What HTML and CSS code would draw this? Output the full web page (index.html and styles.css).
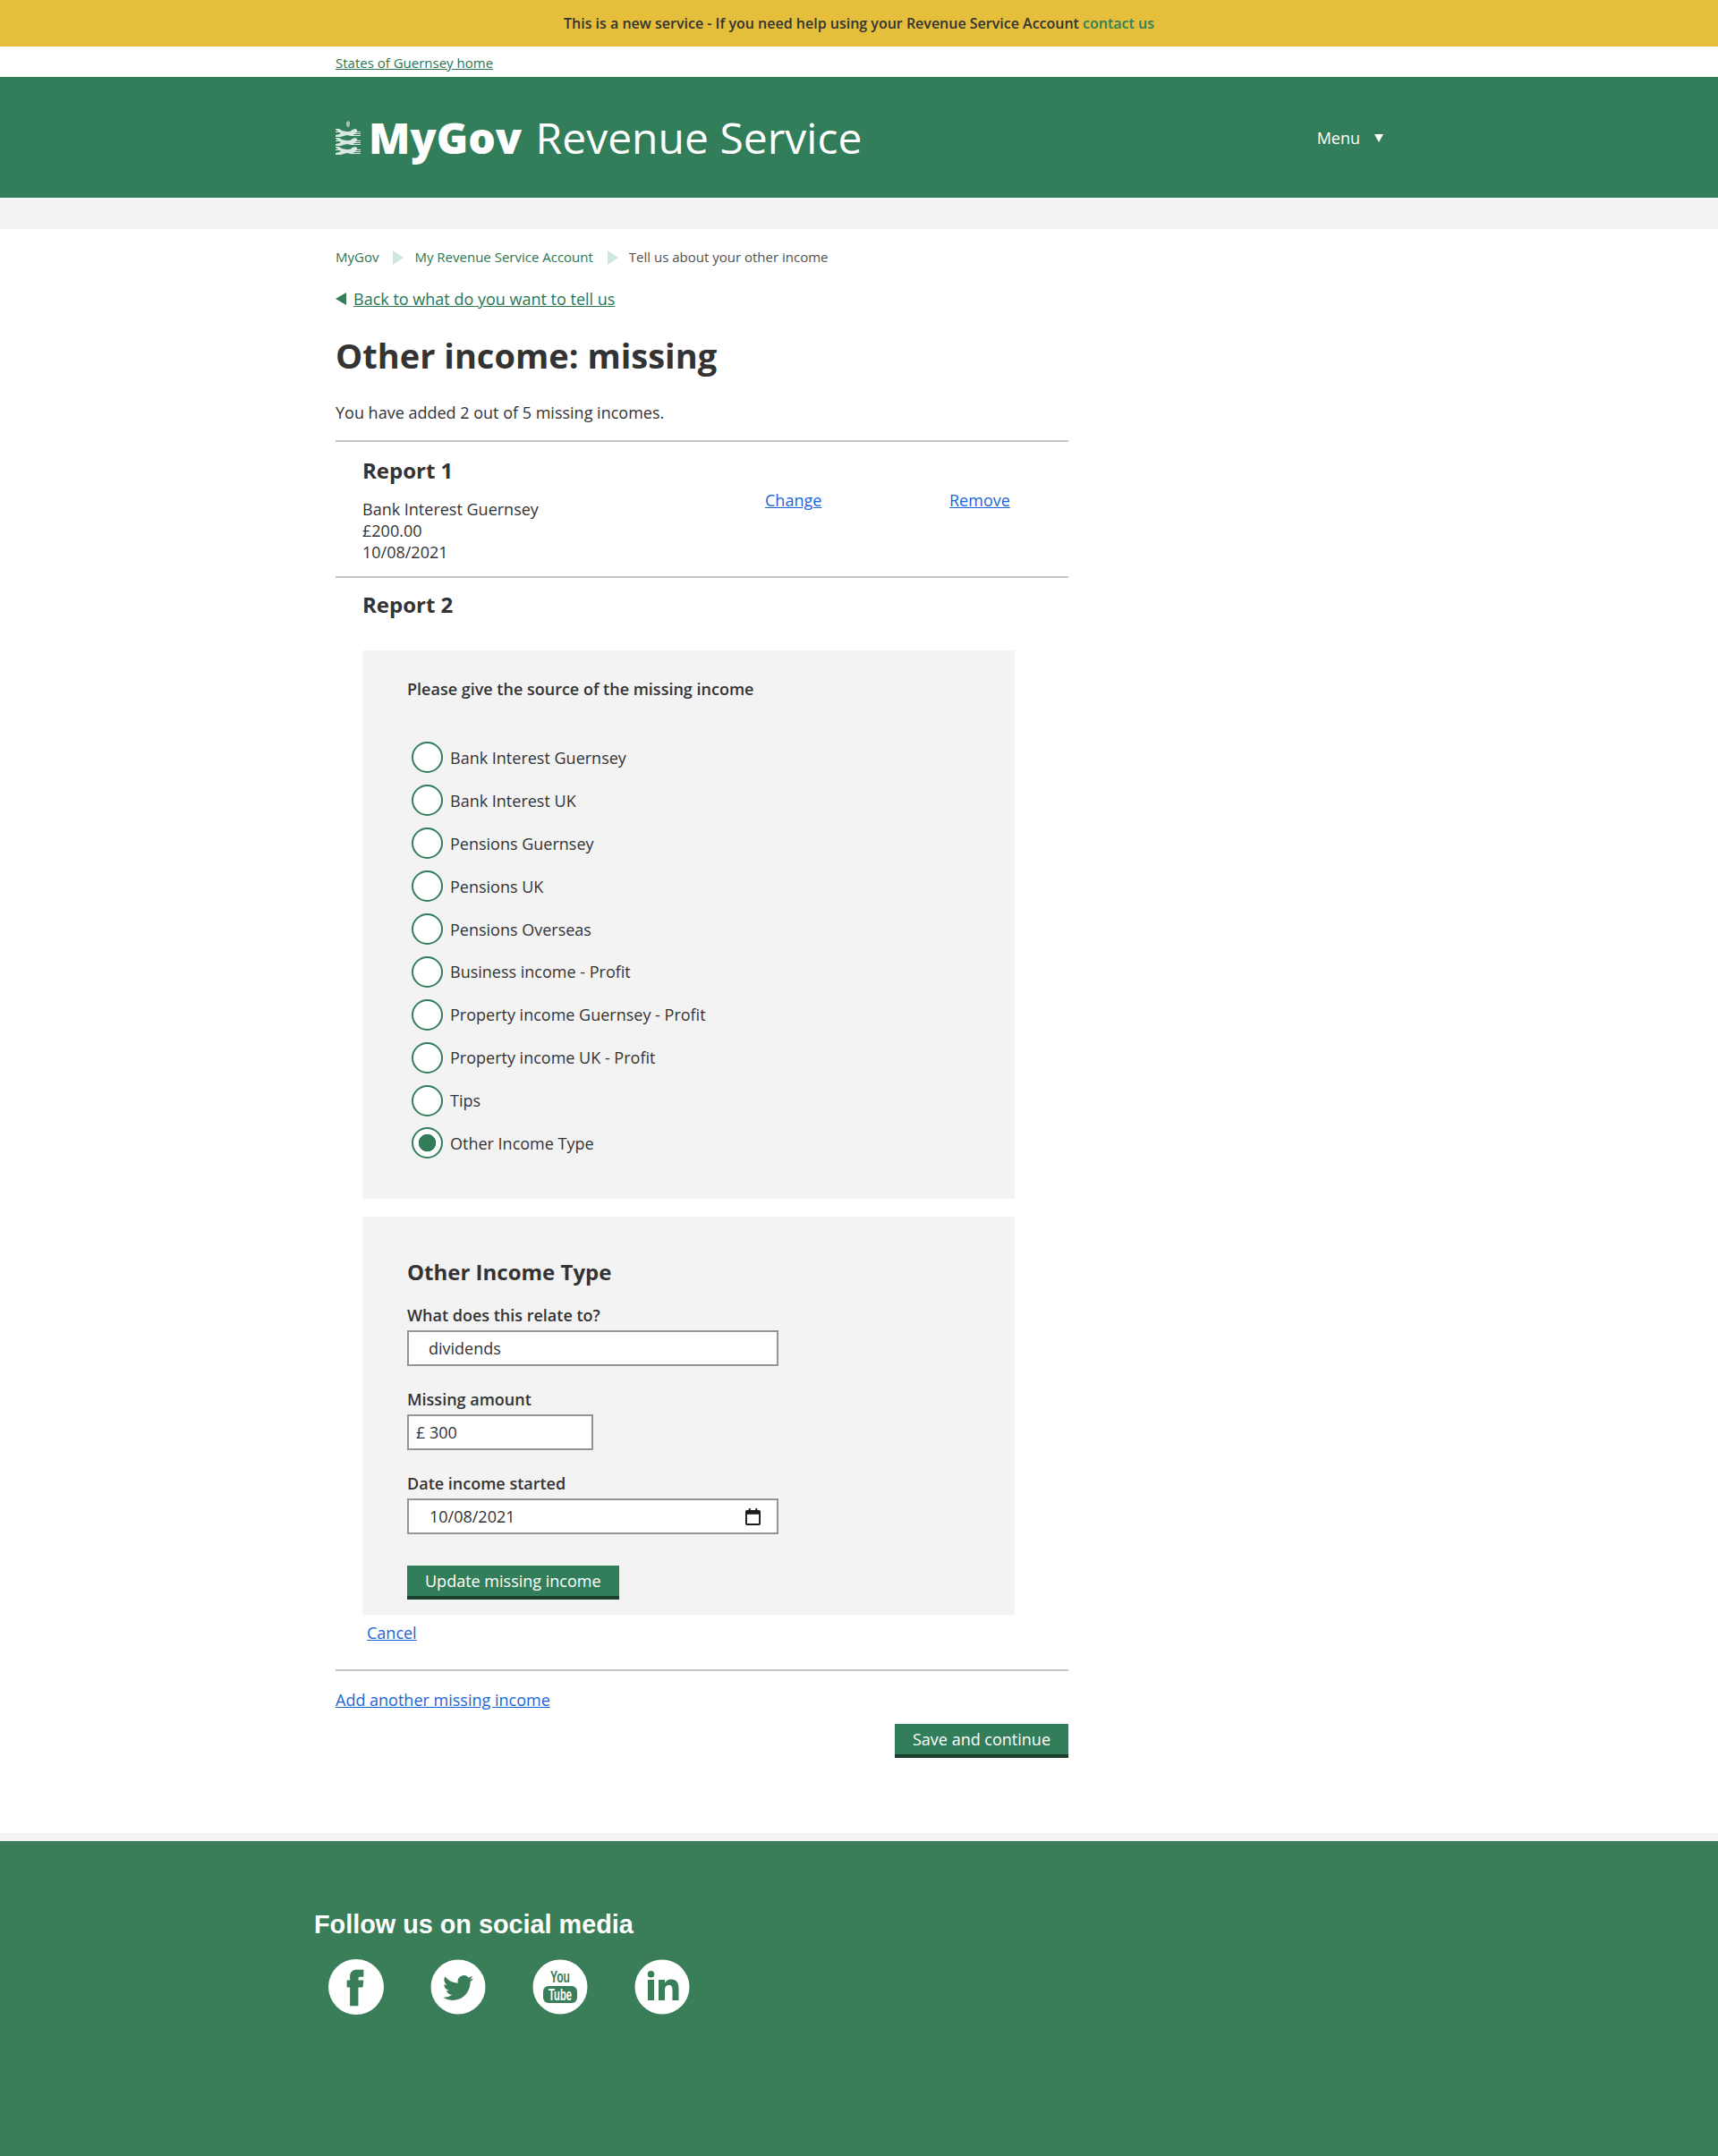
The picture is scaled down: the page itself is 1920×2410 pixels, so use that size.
FILE: index.html
```html
<!DOCTYPE html>
<html lang="en">
<head>
    <meta charset="utf-8">
    <title>Other income: missing - MyGov Revenue Service</title>
    <link rel="stylesheet" href="styles.css">
</head>
<body>
<div class="banner">This is a new service - If you need help using your Revenue Service Account <a href="#">contact us</a></div>
<div class="wrap toplink"><a href="#">States of Guernsey home</a></div>
<header class="masthead">
    <div class="wrap masthead-inner">
        <a class="brand" href="#">
            <svg class="crest" viewBox="0 0 28 38" aria-hidden="true">
                <defs>
                    <g id="lion">
                        <path d="M0 0h4l3 2 5 1 4 0 3-2 3-1 2 1v2h4v1h-5l-1 1h6v1h-7l-1 1 3 0h5v1H17l-4-1-4 1-3 1H0V7l4-1 2-1-2-1-4 0V3l3 0L0 1z"/>
                    </g>
                </defs>
                <path d="M14 0l2 1.500v3L15 7h-2l-1-2.500v-3z" opacity=".65"/>
                <use href="#lion" y="9"/>
                <use href="#lion" y="19"/>
                <use href="#lion" y="29"/>
            </svg>
            <span class="brand-name"><b>MyGov</b> Revenue Service</span>
        </a>
        <a class="menu" href="#">Menu <span class="menu-arrow"></span></a>
    </div>
</header>
<div class="greybar"></div>
<main class="wrap page">
    <nav class="crumbs">
        <a href="#">MyGov</a><span class="crumb-sep"></span>
        <a href="#">My Revenue Service Account</a><span class="crumb-sep"></span>
        <span>Tell us about your other income</span>
    </nav>
    <a class="back" href="#">Back to what do you want to tell us</a>
    <h1>Other income: missing</h1>
    <p class="intro">You have added 2 out of 5 missing incomes.</p>

    <div class="column">
        <section class="report report-done">
            <div class="report-text">
                <h2>Report 1</h2>
                <p>Bank Interest Guernsey<br>£200.00<br>10/08/2021</p>
            </div>
            <a class="link change" href="#">Change</a>
            <a class="link remove" href="#">Remove</a>
        </section>
        <section class="report report-edit">
            <h2>Report 2</h2>
            <form>
                <div class="panel panel-radios">
                    <p class="legend">Please give the source of the missing income</p>
                    <label class="radio"><input type="radio" name="src"><span>Bank Interest Guernsey</span></label>
                    <label class="radio"><input type="radio" name="src"><span>Bank Interest UK</span></label>
                    <label class="radio"><input type="radio" name="src"><span>Pensions Guernsey</span></label>
                    <label class="radio"><input type="radio" name="src"><span>Pensions UK</span></label>
                    <label class="radio"><input type="radio" name="src"><span>Pensions Overseas</span></label>
                    <label class="radio"><input type="radio" name="src"><span>Business income - Profit</span></label>
                    <label class="radio"><input type="radio" name="src"><span>Property income Guernsey - Profit</span></label>
                    <label class="radio"><input type="radio" name="src"><span>Property income UK - Profit</span></label>
                    <label class="radio"><input type="radio" name="src"><span>Tips</span></label>
                    <label class="radio"><input type="radio" name="src" checked><span>Other Income Type</span></label>
                </div>
                <div class="panel panel-fields">
                    <h3>Other Income Type</h3>
                    <label class="field-label" for="relate">What does this relate to?</label>
                    <input class="field field-long field-indent" id="relate" type="text" value="dividends">
                    <label class="field-label" for="amount">Missing amount</label>
                    <input class="field field-short" id="amount" type="text" value="£ 300">
                    <label class="field-label" for="started">Date income started</label>
                    <div class="field field-long date">
                        <input id="started" type="text" value="10/08/2021">
                        <svg class="cal" viewBox="0 0 18 20" aria-hidden="true">
                            <path d="M4 0h2v2h6V0h2v2h2a2 2 0 0 1 2 2v14a2 2 0 0 1-2 2H2a2 2 0 0 1-2-2V4a2 2 0 0 1 2-2h2zM2 7v11h14V7z"/>
                        </svg>
                    </div>
                    <button class="btn btn-update" type="button">Update missing income</button>
                </div>
                <a class="link cancel" href="#">Cancel</a>
            </form>
        </section>
        <div class="after">
            <a class="link" href="#">Add another missing income</a>
        </div>
        <div class="save-row">
            <button class="btn" type="button">Save and continue</button>
        </div>
    </div>
</main>
<div class="greystrip"></div>
<footer class="footer">
    <div class="footer-inner">
        <h2>Follow us on social media</h2>
        <div class="social">
            <a class="social-icon" href="#" aria-label="Facebook">
                <svg viewBox="0 0 63 63"><circle cx="31.500" cy="31.500" r="31.500" fill="#fff"/><path fill="#397d59" d="M24.500 53V32H21v-8h3.500v-4c0-5.500 3-8 8-8H40v8h-4c-1.500 0-2 .8-2 2.500V24h6l-1 8h-5v21z"/></svg>
            </a>
            <a class="social-icon" href="#" aria-label="Twitter">
                <svg viewBox="0 0 62 62"><circle cx="31" cy="31" r="30.500" fill="#fff"/><g transform="translate(14 15) scale(1.42)"><path fill="#397d59" d="M23.953 4.57a10 10 0 01-2.825.775 4.958 4.958 0 002.163-2.723c-.951.555-2.005.959-3.127 1.184a4.92 4.92 0 00-8.384 4.482C7.69 8.095 4.067 6.13 1.64 3.162a4.822 4.822 0 00-.666 2.475c0 1.71.87 3.213 2.188 4.096a4.904 4.904 0 01-2.228-.616v.06a4.923 4.923 0 003.946 4.827 4.996 4.996 0 01-2.212.085 4.936 4.936 0 004.604 3.417 9.867 9.867 0 01-6.102 2.105c-.39 0-.779-.023-1.17-.067a13.995 13.995 0 007.557 2.209c9.053 0 13.998-7.496 13.998-13.985 0-.21 0-.42-.015-.63A9.935 9.935 0 0024 4.59z"/></g></svg>
            </a>
            <a class="social-icon" href="#" aria-label="YouTube">
                <svg viewBox="0 0 62 62"><circle cx="31" cy="31" r="30.500" fill="#fff"/><text class="yt-you" x="31" y="26" text-anchor="middle" textLength="22" lengthAdjust="spacingAndGlyphs">You</text><rect x="12" y="30" width="38" height="19" rx="6" fill="#397d59"/><text class="yt-tube" x="31" y="45.500" text-anchor="middle" textLength="26" lengthAdjust="spacingAndGlyphs">Tube</text></svg>
            </a>
            <a class="social-icon" href="#" aria-label="LinkedIn">
                <svg viewBox="0 0 62 62"><circle cx="31" cy="31" r="30.500" fill="#fff"/><path fill="#397d59" d="M15 23h7v23h-7zM18.500 13a3.800 3.800 0 1 1 0 7.600 3.800 3.800 0 0 1 0-7.600zM27 23h7v3.500c1.500-2.500 4-4 7-4 6 0 8.500 3.800 8.500 10.500V46h-7v-11.500c0-3.500-1-5.500-4-5.500s-4.500 2-4.500 5.500V46h-7z"/></svg>
            </a>
        </div>
    </div>
</footer>
</body>
</html>
```

FILE: styles.css
```css
* {
    box-sizing: border-box;
}

html, body {
    margin: 0;
    padding: 0;
}

body {
    font-family: "Open Sans", sans-serif;
    font-size: 18px;
    line-height: 24px;
    color: #333;
    background: #fff;
}

a {
    color: #2a7651;
}

.wrap {
    width: 1170px;
    margin: 0 auto;
}

.banner {
    height: 52px;
    background: #e5be3b;
    font-size: 16px;
    font-weight: 600;
    line-height: 52px;
    text-align: center;
}

.banner a {
    color: #2f7f5a;
    text-decoration: none;
}

.toplink {
    height: 34px;
    font-size: 15px;
    line-height: 36px;
}

.masthead {
    height: 135px;
    background: #337e5a;
}

.masthead-inner {
    height: 100%;
    display: flex;
    align-items: center;
    justify-content: space-between;
}

.brand {
    display: flex;
    align-items: center;
    color: #fff;
    text-decoration: none;
}

.crest {
    width: 28px;
    height: 38px;
    fill: #dbe8e1;
    margin-right: 9px;
}

.brand-name {
    font-size: 48px;
    line-height: 64px;
}

.brand-name b {
    font-weight: 800;
    margin-right: 3px;
}

.menu {
    color: #fff;
    font-size: 18px;
    text-decoration: none;
    display: flex;
    align-items: center;
}

.menu-arrow {
    width: 0;
    height: 0;
    margin: 2px -1px 0 16px;
    border-left: 5.500px solid transparent;
    border-right: 5.500px solid transparent;
    border-top: 9px solid #fff;
}

.greybar {
    height: 35px;
    background: #f3f3f3;
}

.page {
    height: 1793px;
    padding-top: 20px;
}

.crumbs {
    display: flex;
    align-items: center;
    font-size: 15px;
    line-height: 23px;
    color: #505050;
}

.crumbs a {
    text-decoration: none;
}

.crumb-sep {
    width: 0;
    height: 0;
    margin: 0 12px 0 16px;
    border-top: 8px solid transparent;
    border-bottom: 8px solid transparent;
    border-left: 12px solid #cfe7dc;
}

.back {
    display: block;
    width: max-content;
    position: relative;
    margin-top: 23px;
    margin-left: 20px;
    line-height: 24px;
}

.back::before {
    content: "";
    position: absolute;
    left: -20px;
    top: 5px;
    border-top: 7px solid transparent;
    border-bottom: 7px solid transparent;
    border-right: 12px solid #337e5a;
}

h1 {
    margin: 24px 0 0;
    font-size: 38px;
    line-height: 54px;
    font-weight: 700;
}

.intro {
    margin: 25px 0 0;
}

.column {
    width: 819px;
    margin-top: 19px;
}

h2 {
    margin: 0;
    font-size: 24px;
    line-height: 32px;
    font-weight: 700;
}

.report {
    padding-left: 30px;
}

.report-done {
    height: 154px;
    display: flex;
    align-items: flex-start;
    border-top: 2px solid #c4c4c4;
    border-bottom: 2px solid #c4c4c4;
    padding-top: 16px;
}

.report-text {
    width: 450px;
}

.report-text p {
    margin: 15px 0 0;
}

.link {
    color: #1a65d6;
}

.change {
    margin-top: 37px;
    width: 206px;
}

.remove {
    margin-top: 37px;
}

.report-edit {
    padding-top: 14px;
}

.panel {
    width: 729px;
    background: #f3f3f3;
    padding-left: 50px;
}

.panel-radios {
    height: 613px;
    margin-top: 35px;
    padding-top: 31px;
}

.legend {
    margin: 0 0 41px;
    font-weight: 600;
    line-height: 24px;
}

.radio {
    display: flex;
    align-items: center;
    height: 47.900px;
    padding-left: 5px;
}

.radio input {
    appearance: none;
    width: 35px;
    height: 35px;
    margin: 0 8px 0 0;
    border: 2px solid #337e5a;
    border-radius: 50%;
    background: #fff;
}

.radio input:checked {
    background: radial-gradient(circle, #337e5a 0, #337e5a 9.500px, #fff 10px);
}

.panel-fields {
    height: 445px;
    margin-top: 20px;
    padding-top: 45px;
}

h3 {
    margin: 0;
    font-size: 24px;
    line-height: 34px;
    font-weight: 700;
}

.field-label {
    display: block;
    font-weight: 600;
    line-height: 24px;
    margin-top: 25px;
    margin-bottom: 5px;
}

h3 + .field-label {
    margin-top: 19px;
}

.field {
    display: block;
    height: 40px;
    border: 2px solid #949494;
    background: #fff;
    font: inherit;
    color: inherit;
    padding: 0 8px;
}

.field-long {
    width: 415px;
}

.field-short {
    width: 208px;
}

.field-indent {
    padding-left: 22px;
}

.date {
    display: flex;
    align-items: center;
    justify-content: space-between;
    padding: 0 18px 0 23px;
}

.date input {
    border: 0;
    padding: 0;
    outline: 0;
    font: inherit;
    color: inherit;
    background: none;
    width: 200px;
}

.cal {
    width: 17px;
    height: 19px;
    fill: #1a1a1a;
}

.btn {
    display: block;
    height: 38px;
    padding: 0 20px;
    border: 0;
    border-bottom: 4px solid #1c3f2d;
    background: #337e5a;
    color: #fff;
    font: inherit;
    line-height: 34px;
}

.btn-update {
    margin-top: 35px;
}

.cancel {
    display: inline-block;
    margin: 8px 0 0 5px;
}

.after {
    margin-top: 29px;
    padding-top: 20px;
    border-top: 2px solid #c4c4c4;
}

.save-row {
    display: flex;
    justify-content: flex-end;
    margin-top: 15px;
}

.greystrip {
    height: 9px;
    background: #f3f3f3;
}

.footer {
    height: 352px;
    background: #397d59;
    color: #fff;
}

.footer-inner {
    width: 1218px;
    margin: 0 auto;
    padding-top: 76px;
}

.footer h2 {
    font-family: "Liberation Sans", Arial, sans-serif;
    font-size: 28.800px;
    line-height: 34px;
    font-weight: 700;
}

.social {
    display: flex;
    gap: 52px;
    margin-top: 22px;
    padding-left: 16px;
}

.social-icon {
    display: block;
    width: 62px;
    height: 62px;
}

.social-icon svg {
    display: block;
    width: 62px;
    height: 62px;
}

.yt-you, .yt-tube {
    font-family: "Liberation Sans", Arial, sans-serif;
    font-weight: 700;
}

.yt-you {
    font-size: 18px;
    fill: #397d59;
}

.yt-tube {
    font-size: 18px;
    fill: #fff;
}
```
